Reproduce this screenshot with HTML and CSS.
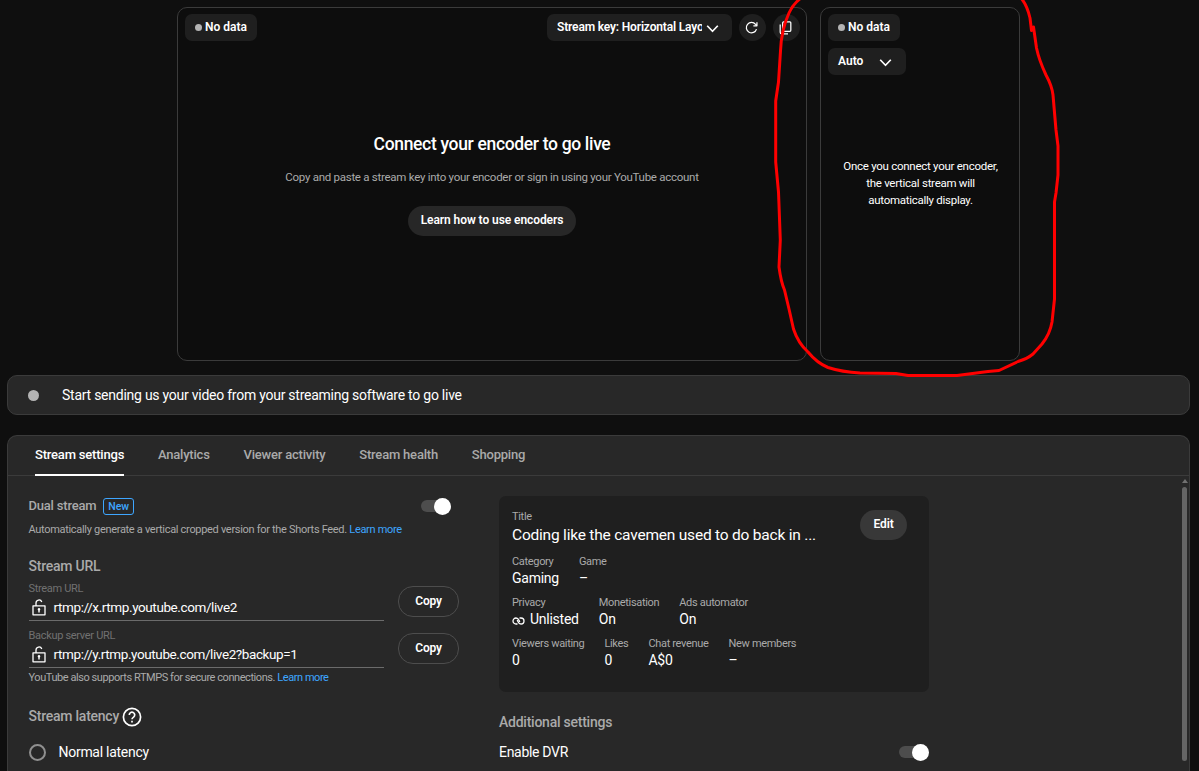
FILE: index.html
```
<!DOCTYPE html>
<html lang="en">
<head>
<meta charset="UTF-8" />
<meta name="viewport" content="width=device-width, initial-scale=1" />
<title>Live Control Room</title>
<link rel="stylesheet" href="styles.css">
</head>
<body>
<section class="previews">
  <div class="preview main-preview">
    <div class="preview-bar">
      <span class="chip status"><i class="dot"></i>No data</span>
      <button class="chip key-select">
        <span class="key-name">Stream key: Horizontal Layout</span>
        <svg class="chevron" viewBox="0 0 14 9"><path d="M1.3 1.5 7 7.500l5.7-6" /></svg>
      </button>
      <button class="round-btn" aria-label="Reset">
        <svg viewBox="0 0 24 24"><path d="M20 14.500A8.300 8.300 0 1 1 18.500 7L20.500 9M20.700 3.500V9.300H15" /></svg>
      </button>
      <button class="round-btn" aria-label="Copy stream key">
        <svg viewBox="0 0 24 24"><path d="M9 3h10a1.500 1.500 0 0 1 1.500 1.500v12A1.500 1.500 0 0 1 19 18H9a1.500 1.500 0 0 1-1.500-1.500v-12A1.500 1.500 0 0 1 9 3zM3.500 7v12.500A2.500 2.500 0 0 0 6 22h10" /></svg>
      </button>
    </div>
    <div class="connect">
      <h1>Connect your encoder to go live</h1>
      <p>Copy and paste a stream key into your encoder or sign in using your YouTube account</p>
      <button class="pill learn-btn">Learn how to use encoders</button>
    </div>
  </div>
  <div class="preview side-preview">
    <span class="chip status"><i class="dot"></i>No data</span>
    <button class="chip auto-select">Auto
      <svg class="chevron" viewBox="0 0 14 9"><path d="M1.3 1.5 7 7.500l5.7-6" /></svg>
    </button>
    <p>Once you connect your encoder, the vertical stream will automatically display.</p>
  </div>
  <!-- hand-drawn marker round the vertical preview -->
  <svg class="marker" viewBox="0 0 300 380">
    <path d="M41 -2Q33 4 29 13C23 26 21 38 20.500 51L18.500 82L15.700 101V162L18.500 192L19 205L20.300 240L19 267Q21 282 24.500 290L29 309L33.500 329Q38 343 48 352Q57 363 68 367.500Q82 372 100 373L136 373.500L148 375.500H197L228 371.500L239 370.500L258 361.500Q267 359 273 354L282 344Q290 334 292 322L294.500 299V202L296 193L298 175V146L296 130L293 95Q292 86 286 75Q279 60 276.500 48L273.500 27L271.500 30.500L270 18Q267 5 261 -2" />
  </svg>
</section>

<section class="notice">
  <i class="notice-dot"></i>
  <span>Start sending us your video from your streaming software to go live</span>
</section>

<section class="panel">
  <nav class="tabs">
    <a class="tab active">Stream settings</a>
    <a class="tab">Analytics</a>
    <a class="tab">Viewer activity</a>
    <a class="tab">Stream health</a>
    <a class="tab">Shopping</a>
  </nav>
  <div class="panel-body">
    <div class="settings">
      <div class="setting-row dual">
        <h2>Dual stream</h2>
        <span class="badge">New</span>
        <span class="toggle"></span>
      </div>
      <p class="hint">Automatically generate a vertical cropped version for the Shorts Feed. <a>Learn more</a></p>

      <h2 class="url-heading">Stream URL</h2>
      <div class="url-row">
        <div class="field">
          <label>Stream URL</label>
          <div class="value">
            <svg class="lock" viewBox="0 0 14 17"><path d="M1 6.800h12v9H1zM4 6.500V4a3 3 0 0 1 5.800-1.100" /><path class="fill" d="M7 9a1.300 1.300 0 0 1 .7 2.400V13.500H6.300V11.400A1.300 1.300 0 0 1 7 9z" /></svg>
            <span>rtmp://x.rtmp.youtube.com/live2</span>
          </div>
        </div>
        <button class="pill copy-btn">Copy</button>
      </div>
      <div class="url-row">
        <div class="field">
          <label>Backup server URL</label>
          <div class="value">
            <svg class="lock" viewBox="0 0 14 17"><path d="M1 6.800h12v9H1zM4 6.500V4a3 3 0 0 1 5.800-1.100" /><path class="fill" d="M7 9a1.300 1.300 0 0 1 .7 2.400V13.500H6.300V11.400A1.300 1.300 0 0 1 7 9z" /></svg>
            <span>rtmp://y.rtmp.youtube.com/live2?backup=1</span>
          </div>
        </div>
        <button class="pill copy-btn">Copy</button>
      </div>
      <p class="hint rtmps">YouTube also supports RTMPS for secure connections. <a>Learn more</a></p>

      <div class="latency">
        <h2>Stream latency</h2>
        <svg class="help" viewBox="0 0 20 20"><circle cx="10" cy="10" r="8.600" /><path d="M7.300 8a2.700 2.700 0 1 1 4.300 2.100C10.600 10.800 10 11.200 10 12.300" /><path d="M10 13.700v1.800" /></svg>
      </div>
      <label class="radio"><i></i>Normal latency</label>
    </div>

    <div class="details">
      <div class="card">
        <div class="card-head">
          <div class="item title">
            <span>Title</span>
            <b>Coding like the cavemen used to do back in ...</b>
          </div>
          <button class="pill edit-btn">Edit</button>
        </div>
        <div class="items">
          <div class="item"><span>Category</span><b>Gaming</b></div>
          <div class="item"><span>Game</span><b>–</b></div>
        </div>
        <div class="items">
          <div class="item"><span>Privacy</span><b><svg class="link" viewBox="0 0 13 8"><path d="M5.500 7H4A3 3 0 0 1 4 1c1.500 0 2.300.8 3 2.300L7.800 5M7.500 1H9a3 3 0 0 1 0 6C7.500 7 6.700 6.200 6 4.700L5.200 3" /></svg>Unlisted</b></div>
          <div class="item"><span>Monetisation</span><b>On</b></div>
          <div class="item"><span>Ads automator</span><b>On</b></div>
        </div>
        <div class="items">
          <div class="item"><span>Viewers waiting</span><b>0</b></div>
          <div class="item"><span>Likes</span><b>0</b></div>
          <div class="item"><span>Chat revenue</span><b>A$0</b></div>
          <div class="item"><span>New members</span><b>–</b></div>
        </div>
      </div>
      <h2 class="additional">Additional settings</h2>
      <div class="setting-row dvr">
        <span>Enable DVR</span>
        <span class="toggle"></span>
      </div>
    </div>

    <div class="scrollbar"><i class="arrow"></i><i class="thumb"></i></div>
  </div>
</section>
</body>
</html>
```
FILE: styles.css
```
* {
  box-sizing: border-box;
}
body {
  margin: 0;
  height: 771px;
  overflow: hidden;
  display: flex;
  flex-direction: column;
  padding: 7px 9px 0 7px;
  background: #0f0f0f;
  color: #fff;
  font-family: Roboto, "Liberation Sans", sans-serif;
  font-size: 14px;
}
h1, h2, p {
  margin: 0;
}
button {
  font-family: inherit;
  color: inherit;
  border: none;
  padding: 0;
}
svg {
  display: block;
  fill: none;
  stroke: #fff;
  stroke-linejoin: round;
  flex: none;
}
h2 {
  font-size: 14px;
  line-height: 18px;
  font-weight: 500;
  letter-spacing: -0.24px;
  color: #aaa;
}

/* previews */
.previews {
  position: relative;
  display: flex;
  gap: 13px;
  height: 354px;
  margin-left: 170px;
}
.preview {
  border: 1px solid #3b3b3b;
  border-radius: 10px;
  background: #0d0d0d;
}
.main-preview {
  width: 630px;
  padding: 6px 6px 6px 7px;
}
.side-preview {
  width: 200px;
  padding: 6px 6px 6px 7px;
  display: flex;
  flex-direction: column;
  align-items: flex-start;
  gap: 7px;
}
.preview-bar {
  display: flex;
  gap: 7px;
}
.chip {
  display: flex;
  align-items: center;
  height: 27px;
  padding: 0 10px 1px;
  border-radius: 7px;
  background: #1f1f1f;
  font-size: 12px;
  font-weight: 600;
}
.status {
  width: 72px;
  gap: 3px;
  white-space: nowrap;
}
.dot {
  width: 7px;
  height: 7px;
  margin-top: 1px;
  border-radius: 50%;
  background: #b4b4b4;
}
.key-select {
  width: 185px;
  margin-left: auto;
  gap: 4px;
}
.key-name {
  width: 145px;
  overflow: hidden;
  white-space: nowrap;
  text-align: left;
  letter-spacing: -0.16px;
}
.chevron {
  width: 13px;
  height: 9px;
  margin-top: 2px;
  stroke-width: 1.8;
}
.auto-select {
  width: 78px;
  justify-content: space-between;
  padding-right: 14px;
}
.round-btn {
  width: 27px;
  height: 27px;
  display: flex;
  align-items: center;
  justify-content: center;
  border-radius: 50%;
  background: #1f1f1f;
}
.round-btn svg {
  width: 15px;
  height: 15px;
  margin-right: 2px;
  stroke-width: 2;
}
.connect {
  display: flex;
  flex-direction: column;
  align-items: center;
  padding: 91px 1px 0 0;
}
.connect h1 {
  font-size: 17.5px;
  line-height: 24px;
  font-weight: 500;
  letter-spacing: -0.33px;
}
.connect p {
  margin: 13px 0 20px;
  font-size: 11.5px;
  line-height: 17px;
  letter-spacing: -0.27px;
  color: #aaa;
}
.pill {
  display: flex;
  align-items: center;
  justify-content: center;
  height: 30px;
  padding-bottom: 2px;
  border-radius: 15px;
  background: #272727;
  font-size: 12px;
  font-weight: 600;
  letter-spacing: -0.08px;
}
.learn-btn {
  width: 168px;
}
.side-preview p {
  align-self: center;
  width: 164px;
  margin-top: 76px;
  font-size: 11.5px;
  line-height: 16.8px;
  letter-spacing: -0.27px;
  text-align: center;
}
.marker {
  position: absolute;
  left: 583px;
  top: -7px;
  width: 300px;
  height: 380px;
  z-index: 2;
  stroke: #f00;
  stroke-width: 3;
  stroke-linecap: round;
}

/* notice */
.notice {
  display: flex;
  align-items: center;
  flex: none;
  height: 40px;
  margin-top: 14px;
  padding-left: 20px;
  border: 1px solid #3b3b3b;
  border-radius: 10px;
  background: #282828;
  font-size: 14px;
  letter-spacing: -0.25px;
}
.notice-dot {
  width: 11px;
  height: 11px;
  margin-right: 23px;
  border-radius: 50%;
  background: #b4b4b4;
}

/* panel */
.panel {
  flex: 1;
  display: flex;
  flex-direction: column;
  margin-top: 20px;
  border: 1px solid #3b3b3b;
  border-bottom: none;
  border-radius: 10px 10px 0 0;
  background: #282828;
}
.tabs {
  display: flex;
  gap: 33.8px;
  height: 40px;
  padding-left: 27px;
  border-bottom: 1px solid #3b3b3b;
}
.tab {
  height: 40px;
  font-size: 13px;
  line-height: 38px;
  font-weight: 500;
  letter-spacing: -0.2px;
  color: #aaa;
}
.tab.active {
  color: #fff;
  border-bottom: 2px solid #fff;
}
.panel-body {
  flex: 1;
  display: flex;
}
.settings {
  flex: none;
  width: 451px;
  padding: 21px 0 0 20.5px;
}
.setting-row {
  display: flex;
  align-items: center;
}
.dual {
  height: 18px;
  padding-right: 8px;
}
.dual h2 {
  font-size: 13px;
  letter-spacing: -0.2px;
}
.badge {
  height: 17px;
  margin-left: 7px;
  padding: 0 4px;
  border: 1px solid #3ea6ff;
  border-radius: 3px;
  font-size: 10.5px;
  line-height: 15px;
  font-weight: 500;
  letter-spacing: -0.1px;
  color: #3ea6ff;
}
.toggle {
  display: flex;
  align-items: center;
  justify-content: flex-end;
  width: 30px;
  height: 12px;
  margin-left: auto;
  border-radius: 6px;
  background: #4d4d4d;
}
.toggle::after {
  content: "";
  width: 17px;
  height: 17px;
  border-radius: 50%;
  background: #fff;
}
.hint {
  margin-top: 7px;
  font-size: 11px;
  line-height: 16px;
  letter-spacing: -0.31px;
  color: #aaa;
  white-space: nowrap;
}
.hint a {
  color: #3ea6ff;
}
.url-heading {
  margin: 19px 0 7px;
}
.url-row {
  display: flex;
  gap: 14px;
  height: 47px;
}
.field {
  width: 356px;
  height: 39px;
  border-bottom: 1px solid #6b6b6b;
}
.field label {
  display: block;
  font-size: 11px;
  line-height: 13px;
  letter-spacing: -0.31px;
  color: #717171;
}
.value {
  display: flex;
  align-items: center;
  height: 24px;
  gap: 8px;
  padding-left: 3px;
  font-size: 13.5px;
  letter-spacing: -0.4px;
}
.lock {
  width: 14px;
  height: 17px;
  stroke-width: 1.3;
}
.fill {
  fill: #fff;
  stroke: none;
}
.copy-btn {
  width: 61px;
  height: 31px;
  margin-top: 4px;
  border: 1px solid #4d4d4d;
  background: none;
  letter-spacing: -0.2px;
}
.hint.rtmps {
  margin-top: -6px;
  letter-spacing: -0.44px;
}
.latency {
  display: flex;
  align-items: center;
  gap: 3px;
  margin-top: 21px;
}
.latency h2 {
  margin-top: -3px;
}
.help {
  width: 20px;
  height: 20px;
  stroke-width: 1.7;
}
.radio {
  display: flex;
  align-items: center;
  gap: 13px;
  margin-top: 16px;
  font-size: 14px;
  letter-spacing: -0.28px;
}
.radio i {
  width: 17px;
  height: 17px;
  margin-top: 1px;
  border: 2px solid #909090;
  border-radius: 50%;
}

/* stream details */
.details {
  width: 430px;
  margin: 20px 0 0 40px;
}
.card {
  height: 196px;
  padding: 13px 14px 0 13px;
  border-radius: 7px;
  background: #1f1f1f;
}
.card-head {
  display: flex;
  justify-content: space-between;
  height: 45px;
}
.items {
  display: flex;
  gap: 20px;
  height: 41px;
}
.item span {
  display: block;
  font-size: 11px;
  line-height: 15px;
  letter-spacing: -0.32px;
  color: #aaa;
}
.item b {
  display: flex;
  align-items: center;
  gap: 5px;
  font-size: 14px;
  line-height: 18px;
  font-weight: 400;
  letter-spacing: -0.25px;
}
.item.title b {
  margin-top: 1px;
  font-size: 15.5px;
  line-height: 21px;
  letter-spacing: -0.21px;
}
.link {
  width: 13px;
  height: 8px;
  margin-top: 3px;
  stroke-width: 1.3;
}
.edit-btn {
  width: 47px;
  margin: 1px 8px 0 0;
  background: #383838;
}
.additional {
  margin-top: 21px;
}
.dvr {
  margin-top: 12px;
  font-size: 14px;
  line-height: 18px;
  letter-spacing: -0.3px;
}

/* scrollbar */
.scrollbar {
  display: flex;
  flex-direction: column;
  align-items: center;
  gap: 4px;
  width: 5px;
  margin: 3px 2px 10px auto;
}
.arrow {
  border: 3px solid transparent;
  border-top: none;
  border-bottom: 4px solid #717171;
}
.thumb {
  flex: 1;
  width: 5px;
  border-radius: 3px;
  background: #656565;
}
```
